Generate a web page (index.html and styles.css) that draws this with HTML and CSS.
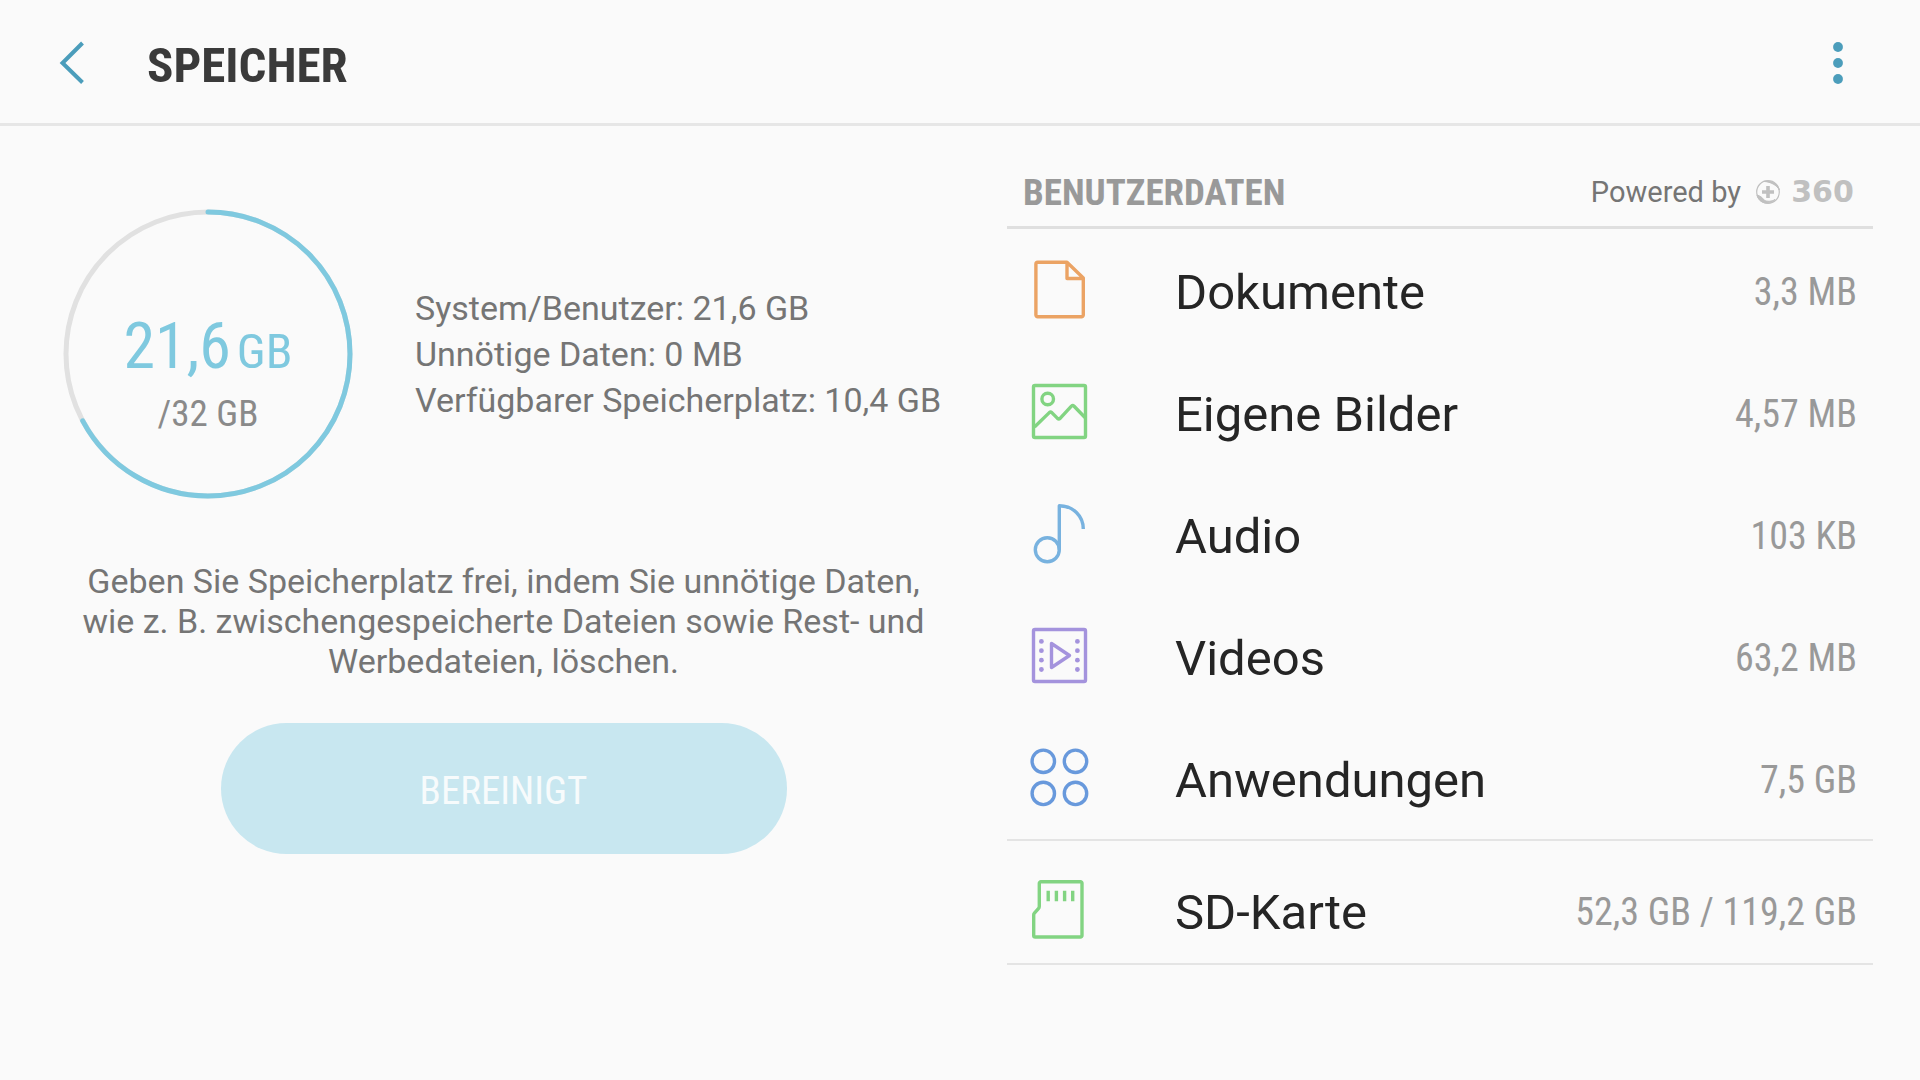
FILE: index.html
```html
<!DOCTYPE html>
<html lang="de">
<head>
<meta charset="UTF-8">
<meta name="viewport" content="width=device-width, initial-scale=1">
<title>Speicher</title>
<link rel="stylesheet" href="styles.css">
</head>
<body>
<header class="topbar">
  <button type="button" class="icon-btn back" aria-label="Zurück">
    <svg width="28" height="44" viewBox="0 0 28 44" fill="none" stroke="currentColor" stroke-width="4"><path d="M24.500 2 4.500 22l20 19.500"/></svg>
  </button>
  <h1>SPEICHER</h1>
  <button type="button" class="icon-btn more" aria-label="Weitere Optionen">
    <svg width="12" height="44" viewBox="0 0 12 44" fill="currentColor"><circle cx="6" cy="6" r="4.9"/><circle cx="6" cy="22" r="4.9"/><circle cx="6" cy="38" r="4.9"/></svg>
  </button>
</header>

<main class="content">
  <section class="overview">
    <div class="usage">
      <div class="ring">
        <svg class="ring-svg" viewBox="0 0 290 290" fill="none" stroke-width="5">
          <circle class="ring-track" cx="145" cy="145" r="142"/>
          <circle class="ring-value" cx="145" cy="145" r="142" pathLength="100" stroke-dasharray="67.2 100" transform="rotate(-90 145 145)"/>
        </svg>
        <div class="ring-text">
          <p class="used">21,6<span class="unit">GB</span></p>
          <p class="total">/32 GB</p>
        </div>
      </div>
      <ul class="stats">
        <li>System/Benutzer: 21,6 GB</li>
        <li>Unnötige Daten: 0 MB</li>
        <li>Verfügbarer Speicherplatz: 10,4 GB</li>
      </ul>
    </div>
    <p class="hint">Geben Sie Speicherplatz frei, indem Sie unnötige Daten, wie z. B. zwischengespeicherte Dateien sowie Rest- und Werbedateien, löschen.</p>
    <button type="button" class="clean-btn" disabled>BEREINIGT</button>
  </section>

  <section class="userdata">
    <div class="section-head">
      <h2>BENUTZERDATEN</h2>
      <div class="powered">
        <span>Powered by</span>
        <svg width="24" height="24" viewBox="0 0 24 24" fill="none" stroke="currentColor">
          <circle cx="12" cy="12" r="11.3" stroke-width="1.2"/>
          <path d="M8 1.4C15 0 22 4 23.4 10 20.500 5 15 2 8 1.400ZM1 15c3 1 5 2 7 5 3 2 8 1.500 11-.5C12 26 3 23 1 15Z" fill="currentColor" stroke-width="1"/>
          <path d="M12 6v12M6 12h12" stroke-width="3.600"/>
        </svg>
        <span class="brand">360</span>
      </div>
    </div>

    <ul class="list">
      <li>
        <a href="#dokumente" class="row">
          <svg class="icon orange" viewBox="0 0 60 60"><path d="M8.700 2.300H38L54.300 18v37a1.800 1.800 0 0 1-1.800 1.800H8.700A1.800 1.800 0 0 1 6.900 55V4.100a1.800 1.800 0 0 1 1.800-1.800ZM38 2.300v16.200h16.300"/></svg>
          <span class="name">Dokumente</span>
          <span class="size">3,3 MB</span>
        </a>
      </li>
      <li>
        <a href="#bilder" class="row">
          <svg class="icon green" viewBox="0 0 60 60"><rect x="4.500" y="3.500" width="52" height="52" rx="1.500"/><circle cx="18.700" cy="17" r="5.800"/><path d="m5.500 45 14.800-14.400a2 2 0 0 1 2.500 0l5.700 5.800a2 2 0 0 0 2.600 0l11.300-12.200a2 2 0 0 1 2.700 0L56 35.500"/></svg>
          <span class="name">Eigene Bilder</span>
          <span class="size">4,57 MB</span>
        </a>
      </li>
      <li>
        <a href="#audio" class="row">
          <svg class="icon sky" viewBox="0 0 60 60"><path d="M30.300 46V1.700C44 1.700 54.300 12 54.300 25"/><circle cx="18.300" cy="45.700" r="12"/></svg>
          <span class="name">Audio</span>
          <span class="size">103 KB</span>
        </a>
      </li>
      <li>
        <a href="#videos" class="row">
          <svg class="icon violet" viewBox="0 0 60 60"><rect x="4.500" y="3.500" width="52" height="52" rx="1.500"/><path d="M22.500 17.500v24L40.500 29.500Z"/><g class="dots"><circle cx="12.400" cy="15.400" r="2.400"/><circle cx="12.400" cy="24.700" r="2.400"/><circle cx="12.400" cy="34.200" r="2.400"/><circle cx="12.400" cy="43.500" r="2.400"/><circle cx="48.400" cy="15.400" r="2.400"/><circle cx="48.400" cy="24.700" r="2.400"/><circle cx="48.400" cy="34.200" r="2.400"/><circle cx="48.400" cy="43.500" r="2.400"/></g></svg>
          <span class="name">Videos</span>
          <span class="size">63,2 MB</span>
        </a>
      </li>
      <li>
        <a href="#anwendungen" class="row">
          <svg class="icon blue" viewBox="0 0 60 60"><circle cx="14.300" cy="13.300" r="11.200"/><circle cx="46.500" cy="13.300" r="11.200"/><circle cx="14.300" cy="45.400" r="11.200"/><circle cx="46.500" cy="45.400" r="11.200"/></svg>
          <span class="name">Anwendungen</span>
          <span class="size">7,5 GB</span>
        </a>
      </li>
    </ul>

    <ul class="list external">
      <li>
        <a href="#sd-karte" class="row">
          <svg class="icon green" viewBox="0 0 60 60"><path d="M12 1.800H51.500a1.500 1.500 0 0 1 1.500 1.500V55.500a1.500 1.500 0 0 1-1.500 1.500H6.200a1.500 1.500 0 0 1-1.500-1.500V35q0-1 .7-1.800l4-4.600q.9-1 .9-2.400V3.300A1.500 1.500 0 0 1 12 1.800Z"/><path d="M19.200 10.700v10.600m8.200-10.600v10.600m8.200-10.600v10.600m8.100-10.600v10.600"/></svg>
          <span class="name">SD-Karte</span>
          <span class="size">52,3 GB / 119,2 GB</span>
        </a>
      </li>
    </ul>
  </section>
</main>
</body>
</html>
```
FILE: styles.css
```css
* {
  box-sizing: border-box;
}
body {
  margin: 0;
  min-height: 100vh;
  background: #fafafa;
  color: #757575;
  font-family: Roboto, "Noto Sans", sans-serif;
  font-size: 34px;
}
h1, h2, p, ul {
  margin: 0;
  padding: 0;
}
ul {
  list-style: none;
}
svg {
  display: block;
  flex: none;
}
h1, h2, .ring-text, .size, .clean-btn {
  font-family: "Roboto Condensed", Roboto, "Noto Sans", sans-serif;
}

/* top bar */
.topbar {
  display: flex;
  align-items: center;
  height: 126px;
  padding: 3px 76px 0 58px;
  border-bottom: 3px solid #e6e6e6;
}
.icon-btn {
  padding: 0;
  border: 0;
  background: none;
  color: #4b9dbb;
  cursor: pointer;
}
.topbar h1 {
  margin-left: 61px;
  padding-top: 4px;
  color: #3a3a3a;
  font-size: 49px;
  font-weight: 700;
}
.more {
  margin-left: auto;
}

.content {
  display: grid;
  grid-template-columns: 1007fr 866fr;
  padding-right: 47px;
}

/* left side */
.overview {
  display: flex;
  flex-direction: column;
  align-items: center;
  padding-top: 83px;
}
.usage {
  display: flex;
  align-items: center;
  align-self: stretch;
  gap: 62px;
  padding-left: 63px;
}
.ring {
  display: grid;
  flex: none;
  width: 290px;
  height: 290px;
}
.ring-svg, .ring-text {
  grid-area: 1 / 1;
}
.ring-track {
  stroke: #e1e1e1;
}
.ring-value {
  stroke: #7fc9df;
  stroke-linecap: round;
}
.ring-text {
  padding-top: 100px;
  text-align: center;
}
.used {
  color: #7fc9df;
  font-size: 64px;
  line-height: 76px;
}
.unit {
  margin-left: 6px;
  font-size: 49px;
}
.total {
  color: #8a8a8a;
  font-size: 37px;
  line-height: 48px;
}
.stats {
  line-height: 46px;
  white-space: nowrap;
}
.hint {
  margin-top: 62px;
  padding: 0 80px;
  line-height: 40px;
  text-align: center;
}
.clean-btn {
  width: 566px;
  height: 131px;
  margin-top: 42px;
  padding: 4px 0 0;
  border: 0;
  border-radius: 66px;
  background: #c8e7f0;
  color: #f7fbfc;
  font-size: 39px;
}

/* right side */
.section-head {
  display: flex;
  align-items: center;
  justify-content: space-between;
  height: 103px;
  padding: 32px 16px 0;
  border-bottom: 3px solid #dfdfdf;
}
.section-head h2 {
  color: #999;
  font-size: 37px;
  font-weight: 700;
}
.powered {
  display: flex;
  align-items: center;
  font-size: 29px;
}
.powered svg {
  margin: 0 8px 0 15px;
  color: #c0c0c0;
}
.brand {
  min-width: 69px;
  color: #c0c0c0;
  font-family: "DejaVu Sans", sans-serif;
  font-size: 30px;
  font-weight: 700;
  line-height: 34px;
  text-align: center;
}
.list {
  border-bottom: 2px solid #e4e4e4;
}
.row {
  display: flex;
  align-items: center;
  height: 122px;
  padding: 0 16px 0 22px;
  color: #252525;
  font-size: 49px;
  text-decoration: none;
}
.external {
  padding-top: 16px;
}
.external .row {
  height: 106px;
}
.name {
  margin-left: 86px;
  padding-top: 4px;
}
.size {
  margin-left: auto;
  padding-top: 4px;
  color: #999;
  font-size: 38px;
}

.icon {
  width: 60px;
  height: 60px;
  fill: none;
  stroke: currentColor;
  stroke-width: 3.4;
  stroke-linejoin: round;
}
.dots {
  fill: currentColor;
  stroke: none;
}
.orange {
  color: #eba364;
}
.green {
  color: #82d482;
}
.sky {
  color: #78b2df;
}
.violet {
  color: #a493dd;
}
.blue {
  color: #6899dc;
}
```
